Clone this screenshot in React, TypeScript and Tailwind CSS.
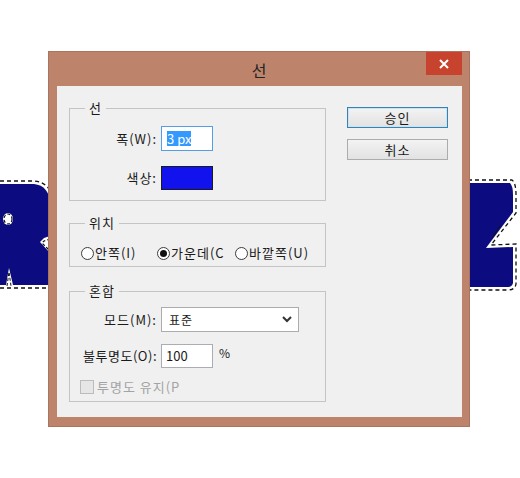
import React from 'react';

const kr = "font-['Noto_Sans_CJK_KR','Noto_Sans',sans-serif]";

function Canvas() {
  // what is drawn on the document behind the dialog: the blue letters with their selection outline
  return (
    <svg className="absolute inset-0" width="520" height="478" viewBox="0 0 520 478">
      <path
        d="M0,184 L34,184 C44,185 50,192 50,204 L50,236 L44,238 L40,242 L50,253 L50,285 L13,285 L9,268 L6,285 L0,285 Z"
        fill="#0c0c80"
      />
      <ellipse cx="8" cy="219" rx="5" ry="6" fill="#fff" />
      <ellipse cx="8" cy="219" rx="4" ry="5" fill="none" stroke="#111" strokeWidth="1.2" strokeDasharray="3 2" />
      <path d="M0,181 L34,181 C46,182 53,190 53,204" fill="none" stroke="#111" strokeWidth="1.3" strokeDasharray="4 3" />
      <path d="M0,288 L52,288" fill="none" stroke="#111" strokeWidth="1.3" strokeDasharray="4 3" />
      <path d="M50,239 L44,241 L42,243 L50,251" fill="none" stroke="#111" strokeWidth="1.2" strokeDasharray="3 2" />
      <path d="M7,286 L9,272 L11,286" fill="none" stroke="#111" strokeWidth="1" strokeDasharray="3 2" />

      <path
        d="M466,183 L510,183 Q513,186 513,195 L513,212 L486,248 L513,247 L513,283 Q512,287 508,287 L466,287 Z"
        fill="#0c0c80"
      />
      <path
        d="M468,180 L512,180 Q516,183 516,195 L516,213 L491,245 L516,244 L516,284 Q515,290 508,290 L466,290"
        fill="none"
        stroke="#111"
        strokeWidth="1.3"
        strokeDasharray="4 3"
      />
      <path d="M500,226 L492,238" fill="none" stroke="#111" strokeWidth="1" />
    </svg>
  );
}

function Radio({ checked, label, width }: { checked?: boolean; label: string; width: string }) {
  return (
    <div className={`flex items-center shrink-0 ${width}`}>
      <span className="w-[13px] h-[13px] rounded-full border border-[#3c3c3c] bg-white flex items-center justify-center shrink-0">
        {checked && <span className="w-[7px] h-[7px] rounded-full bg-[#111]" />}
      </span>
      <span className="ml-[1px] whitespace-nowrap">{label}</span>
    </div>
  );
}

function Button({ label, primary }: { label: string; primary?: boolean }) {
  return (
    <button
      className={`w-[101px] h-[21px] border ${
        primary ? 'border-[#3c7fb1] shadow-[inset_0_0_0_1px_#c4e5f6]' : 'border-[#acacac]'
      } bg-gradient-to-b from-[#f3f3f3] to-[#e2e2e2] text-[13px] leading-[19px] tracking-[1px] text-[#1a1a1a]`}
    >
      {label}
    </button>
  );
}

export default function App() {
  return (
    <div className={`relative w-[520px] h-[478px] bg-white overflow-hidden ${kr}`}>
      <Canvas />

      {/* dialog window */}
      <div className="absolute left-[48px] top-[51px] w-[422px] h-[376px] border border-[#a97462] bg-[#bd846b] flex flex-col">
        <div className="relative h-[34px] shrink-0 flex items-center justify-center">
          <span className="text-[16px] text-[#222] leading-none mt-[1px]">선</span>
          <button className="absolute top-0 right-[7px] w-[36px] h-[23px] bg-[#c7432e] flex items-center justify-center">
            <svg width="10" height="10" viewBox="0 0 10 10">
              <path d="M1,1 L9,9 M9,1 L1,9" stroke="#fff" strokeWidth="2" />
            </svg>
          </button>
        </div>

        <div className="mx-[8px] mr-[7px] h-[331px] bg-[#f0f0f0] flex pl-[12px] pt-[15px] text-[13px] tracking-[1px] text-[#1a1a1a]">
          <div className="w-[257px] flex flex-col">
            {/* 선 */}
            <fieldset className="border border-[#c4c4c4] px-0 pt-[11px] pb-[10px] m-0">
              <legend className="ml-[15px] px-[4px] leading-[14px]">선</legend>
              <div className="grid grid-cols-[87px_auto] gap-x-[4px] gap-y-[15px] items-center">
                <span className="text-right">폭(W):</span>
                <div className="w-[52px] h-[25px] border border-[#569de5] bg-white flex items-center pl-[5px]">
                  <span className="bg-[#3399ff] text-white leading-[15px] tracking-normal">3 px</span>
                </div>
                <span className="text-right">색상:</span>
                <div className="w-[52px] h-[24px] border border-[#1b1b1b] bg-[#1212ee]" />
              </div>
            </fieldset>

            {/* 위치 */}
            <fieldset className="border border-[#c4c4c4] px-0 pt-[15px] pb-[5px] mt-[15px] min-w-0">
              <legend className="ml-[15px] px-[4px] leading-[14px]">위치</legend>
              <div className="flex items-center h-[16px] pl-[11px]">
                <Radio label="안쪽(I)" width="w-[76px]" />
                <Radio label="가운데(C" checked width="w-[78px]" />
                <Radio label="바깥쪽(U)" width="w-[88px]" />
              </div>
            </fieldset>

            {/* 혼합 */}
            <fieldset className="border border-[#c4c4c4] px-0 pt-[9px] pb-[6px] mt-[17px]">
              <legend className="ml-[15px] px-[4px] leading-[14px]">혼합</legend>
              <div className="grid grid-cols-[87px_auto] gap-x-[4px] items-center">
                <span className="text-right">모드(M):</span>
                <div className="w-[138px] h-[25px] border border-[#acacac] bg-white flex items-center justify-between pl-[7px] pr-[6px]">
                  <span className="text-[12px]">표준</span>
                  <svg width="10" height="7" viewBox="0 0 10 7">
                    <path d="M1,1 L5,5 L9,1" fill="none" stroke="#333" strokeWidth="2" />
                  </svg>
                </div>
                <span className="text-right mt-[12px] tracking-[0.5px]">불투명도(O):</span>
                <div className="flex items-center mt-[12px]">
                  <div className="w-[52px] h-[24px] border border-[#abadb3] bg-white flex items-center pl-[4px] tracking-normal">
                    100
                  </div>
                  <span className="ml-[6px] -mt-[6px] text-[12px]">%</span>
                </div>
              </div>
              <div className="flex items-center h-[16px] mt-[11px] pl-[10px] text-[#a3a3a3]">
                <span className="w-[14px] h-[14px] border border-[#bcbcbc] bg-[#e6e6e6] shrink-0" />
                <span className="ml-[3px] whitespace-nowrap">투명도 유지(P</span>
              </div>
            </fieldset>
          </div>

          <div className="ml-[21px] pt-[6px] flex flex-col gap-[11px]">
            <Button label="승인" primary />
            <Button label="취소" />
          </div>
        </div>
      </div>
    </div>
  );
}
